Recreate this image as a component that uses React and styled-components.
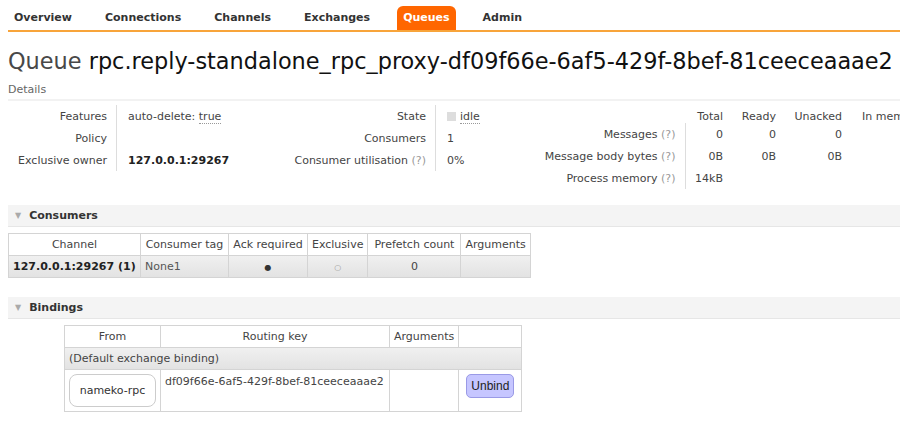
import React from 'react';
import styled, { createGlobalStyle } from 'styled-components';

const GlobalStyle = createGlobalStyle`
    html, body {
        margin: 0;
        padding: 0;
        background: #fff;
        overflow: hidden;
    }
    body {
        font-family: 'DejaVu Sans', Verdana, sans-serif;
        font-size: 11px;
        color: #444;
    }
`;

const Page = styled.div`
    padding: 0 0 0 8px;
    width: 960px;
`;

const Nav = styled.ul`
    display: flex;
    list-style: none;
    margin: 0;
    padding: 6px 0 0 0;
    border-bottom: 2px solid #f8a43a;
`;

const NavTab = styled.li.withConfig({
    shouldForwardProp: (prop) => prop !== 'active',
})`
    padding: 0 6px;
    margin-right: 21px;
    height: 24px;
    line-height: 24px;
    font-weight: bold;
    font-size: 11px;
    border-radius: 6px 6px 0 0;
    background: ${(props) => (props.active ? '#ff6600' : 'transparent')};
    color: ${(props) => (props.active ? '#fff' : '#333')};
`;

const Heading = styled.h1`
    margin: 15px 0 0 0;
    font-size: 22.4px;
    font-weight: normal;
    color: #111;
    white-space: nowrap;
    line-height: 28px;
`;

const HeadingKind = styled.span`
    color: #484848;
`;

const SectionLabel = styled.div`
    margin-top: 8px;
    padding-bottom: 3px;
    font-size: 11px;
    color: #666;
    border-bottom: 2px solid #f2f2f2;
`;

const DetailsRow = styled.div`
    display: flex;
    align-items: flex-start;
    padding-top: 4px;
`;

const Facts = styled.table`
    border-collapse: collapse;
    width: ${(props) => props.width}px;
    table-layout: fixed;
`;

const FactLabel = styled.th.withConfig({
    shouldForwardProp: (prop) => prop !== 'bare' && prop !== 'w',
})`
    width: ${(props) => props.w}px;
    font-weight: normal;
    text-align: right;
    color: #444;
    padding: 0 9px 0 0;
    height: ${(props) => (props.bare ? 18 : 22)}px;
    white-space: nowrap;
    border-right: ${(props) => (props.bare ? 'none' : '1px solid #ddd')};
`;

const FactValue = styled.td.withConfig({
    shouldForwardProp: (prop) => prop !== 'bold',
})`
    padding: 0 0 0 11px;
    height: 22px;
    white-space: nowrap;
    color: ${(props) => (props.bold ? '#222' : '#444')};
    font-weight: ${(props) => (props.bold ? 'bold' : 'normal')};
`;

const Help = styled.span`
    color: #999;
`;

const Dotted = styled.span`
    border-bottom: 1px dotted #999;
`;

const StateBox = styled.span`
    display: inline-block;
    width: 9px;
    height: 9px;
    background: #ddd;
    margin-right: 4px;
    vertical-align: -1px;
`;

const NumHead = styled.th.withConfig({
    shouldForwardProp: (prop) => prop !== 'w' && prop !== 'left',
})`
    width: ${(props) => props.w}px;
    font-weight: normal;
    text-align: ${(props) => (props.left ? 'left' : 'right')};
    padding: 0 0 0 ${(props) => (props.left ? 20 : 0)}px;
    color: #444;
    height: 18px;
    vertical-align: bottom;
    white-space: nowrap;
`;

const NumCell = styled.td`
    text-align: right;
    padding: 0;
    height: 22px;
    color: #444;
    white-space: nowrap;
`;

const SectionBar = styled.div`
    display: flex;
    align-items: center;
    gap: 8px;
    height: 21px;
    margin-top: ${(props) => props.top}px;
    padding-left: 7px;
    background: #f4f4f4;
    border-bottom: 1px solid #e6e6e6;
    font-weight: bold;
    font-size: 11px;
    color: #333;
`;

const Caret = styled.span`
    color: #aaa;
    font-size: 8px;
`;

const ListTable = styled.table`
    border-collapse: collapse;
    margin: 6px 0 0 ${(props) => props.indent || 0}px;
    font-size: 11px;
`;

const HeadCell = styled.th`
    border: 1px solid #d4d4d4;
    font-weight: normal;
    color: #444;
    height: 21px;
    padding: 0 4px;
    width: ${(props) => (props.w ? `${props.w}px` : 'auto')};
    text-align: center;
    white-space: nowrap;
    background: #fff;
`;

const GrayRow = styled.tr`
    background: linear-gradient(#f0f0f0, #e2e2e2);
`;

const Cell = styled.td.withConfig({
    shouldForwardProp: (prop) => !['bold', 'color', 'align', 'valign', 'padTop'].includes(prop),
})`
    border: 1px solid #d4d4d4;
    height: 21px;
    padding: ${(props) => props.padTop || 0}px 4px 0 4px;
    color: ${(props) => props.color || '#444'};
    text-align: ${(props) => props.align || 'left'};
    vertical-align: ${(props) => props.valign || 'middle'};
    font-weight: ${(props) => (props.bold ? 'bold' : 'normal')};
    white-space: nowrap;
`;

const Dot = styled.span`
    font-size: ${(props) => props.size}px;
    color: ${(props) => props.color};
`;

const ExchangeBox = styled.div`
    display: inline-flex;
    align-items: center;
    justify-content: center;
    width: 85px;
    height: 31px;
    margin: 4px 0;
    border: 1px solid #ccc;
    border-radius: 8px;
    background: #fff;
    color: #333;
`;

const UnbindButton = styled.button`
    font-family: 'Liberation Sans', Arial, sans-serif;
    font-size: 12px;
    color: #222;
    background: #c6c6ff;
    border: 1px solid #9a9ae6;
    border-radius: 5px;
    padding: 0 4px;
    height: 24px;
    margin: 0 3px;
`;

const App = () => {
    const tabs = ['Overview', 'Connections', 'Channels', 'Exchanges', 'Queues', 'Admin'];

    return (
        <Page>
            <GlobalStyle />
            <Nav>
                {tabs.map((tab) => (
                    <NavTab key={tab} active={tab === 'Queues'}>
                        {tab}
                    </NavTab>
                ))}
            </Nav>

            <Heading>
                <HeadingKind>Queue</HeadingKind> rpc.reply-standalone_rpc_proxy-df09f66e-6af5-429f-8bef-81ceeceaaae2
            </Heading>

            <SectionLabel>Details</SectionLabel>

            <DetailsRow>
                <Facts width={270}>
                    <tbody>
                        <tr>
                            <FactLabel w={99}>Features</FactLabel>
                            <FactValue>
                                auto-delete: <Dotted>true</Dotted>
                            </FactValue>
                        </tr>
                        <tr>
                            <FactLabel w={99}>Policy</FactLabel>
                            <FactValue />
                        </tr>
                        <tr>
                            <FactLabel w={99}>Exclusive owner</FactLabel>
                            <FactValue bold>127.0.0.1:29267</FactValue>
                        </tr>
                    </tbody>
                </Facts>

                <Facts width={250}>
                    <tbody>
                        <tr>
                            <FactLabel w={148}>State</FactLabel>
                            <FactValue>
                                <StateBox />
                                <Dotted>idle</Dotted>
                            </FactValue>
                        </tr>
                        <tr>
                            <FactLabel w={148}>Consumers</FactLabel>
                            <FactValue>1</FactValue>
                        </tr>
                        <tr>
                            <FactLabel w={148}>Consumer utilisation <Help>(?)</Help></FactLabel>
                            <FactValue>0%</FactValue>
                        </tr>
                    </tbody>
                </Facts>

                <Facts width={420}>
                    <tbody>
                        <tr>
                            <FactLabel w={148} bare />
                            <NumHead w={38}>Total</NumHead>
                            <NumHead w={53}>Ready</NumHead>
                            <NumHead w={66}>Unacked</NumHead>
                            <NumHead w={100} left>In memory</NumHead>
                        </tr>
                        <tr>
                            <FactLabel w={148}>Messages <Help>(?)</Help></FactLabel>
                            <NumCell>0</NumCell>
                            <NumCell>0</NumCell>
                            <NumCell>0</NumCell>
                            <NumCell />
                        </tr>
                        <tr>
                            <FactLabel w={148}>Message body bytes <Help>(?)</Help></FactLabel>
                            <NumCell>0B</NumCell>
                            <NumCell>0B</NumCell>
                            <NumCell>0B</NumCell>
                            <NumCell />
                        </tr>
                        <tr>
                            <FactLabel w={148}>Process memory <Help>(?)</Help></FactLabel>
                            <NumCell>14kB</NumCell>
                            <NumCell />
                            <NumCell />
                            <NumCell />
                        </tr>
                    </tbody>
                </Facts>
            </DetailsRow>

            <SectionBar top={16}>
                <Caret>▼</Caret>
                Consumers
            </SectionBar>

            <ListTable>
                <thead>
                    <tr>
                        <HeadCell w={123}>Channel</HeadCell>
                        <HeadCell w={79}>Consumer tag</HeadCell>
                        <HeadCell w={70}>Ack required</HeadCell>
                        <HeadCell w={50}>Exclusive</HeadCell>
                        <HeadCell w={84}>Prefetch count</HeadCell>
                        <HeadCell w={60}>Arguments</HeadCell>
                    </tr>
                </thead>
                <tbody>
                    <GrayRow>
                        <Cell bold color="#222">127.0.0.1:29267 (1)</Cell>
                        <Cell color="#555">None1</Cell>
                        <Cell align="center"><Dot size={8} color="#333">●</Dot></Cell>
                        <Cell align="center"><Dot size={8} color="#999">○</Dot></Cell>
                        <Cell align="center">0</Cell>
                        <Cell />
                    </GrayRow>
                </tbody>
            </ListTable>

            <SectionBar top={19}>
                <Caret>▼</Caret>
                Bindings
            </SectionBar>

            <ListTable indent={56}>
                <thead>
                    <tr>
                        <HeadCell w={87}>From</HeadCell>
                        <HeadCell w={220}>Routing key</HeadCell>
                        <HeadCell>Arguments</HeadCell>
                        <HeadCell w={52} />
                    </tr>
                </thead>
                <tbody>
                    <GrayRow>
                        <Cell colSpan={4}>(Default exchange binding)</Cell>
                    </GrayRow>
                    <tr>
                        <Cell>
                            <ExchangeBox>nameko-rpc</ExchangeBox>
                        </Cell>
                        <Cell valign="top" padTop={5}>
                            df09f66e-6af5-429f-8bef-81ceeceaaae2
                        </Cell>
                        <Cell />
                        <Cell valign="top" padTop={4}>
                            <UnbindButton>Unbind</UnbindButton>
                        </Cell>
                    </tr>
                </tbody>
            </ListTable>
        </Page>
    );
};

export default App;
